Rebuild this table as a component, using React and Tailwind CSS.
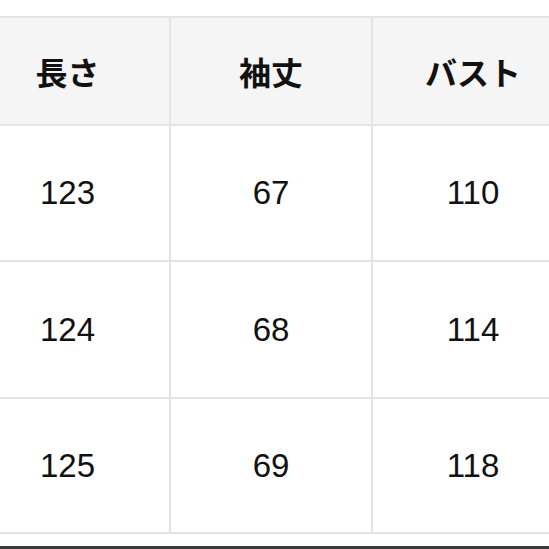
export default function App() {
  const rows = [
    ["123", "67", "110"],
    ["124", "68", "114"],
    ["125", "69", "118"],
  ];
  const heights = ["h-[134px]", "h-[135px]", "h-[133px]"];
  return (
    <div className="w-[549px] h-[549px] overflow-hidden bg-white flex flex-col">
      <div className="pt-[16px]">
        <div className="ml-[-34px] w-[609px] grid grid-cols-[203px_200px_200px] gap-[2px] bg-[#e4e4e4] py-[2px]">
          {["長さ", "袖丈", "バスト"].map((h) => (
            <div
              key={h}
              className="h-[106px] bg-[#f5f5f5] flex items-center justify-center text-[32px] font-bold text-[#111]"
              style={{ fontFamily: '"Noto Sans CJK JP", sans-serif' }}
            >
              {h}
            </div>
          ))}
          {rows.map((r, i) =>
            r.map((v, j) => (
              <div
                key={i + "-" + j}
                className={`${heights[i]} bg-white flex items-center justify-center text-[33px] text-[#111] font-['Liberation_Sans',Arial,sans-serif]`}
              >
                {v}
              </div>
            ))
          )}
        </div>
      </div>
      <div className="mt-auto h-[3px] bg-[#3a3a3a]" />
    </div>
  );
}
